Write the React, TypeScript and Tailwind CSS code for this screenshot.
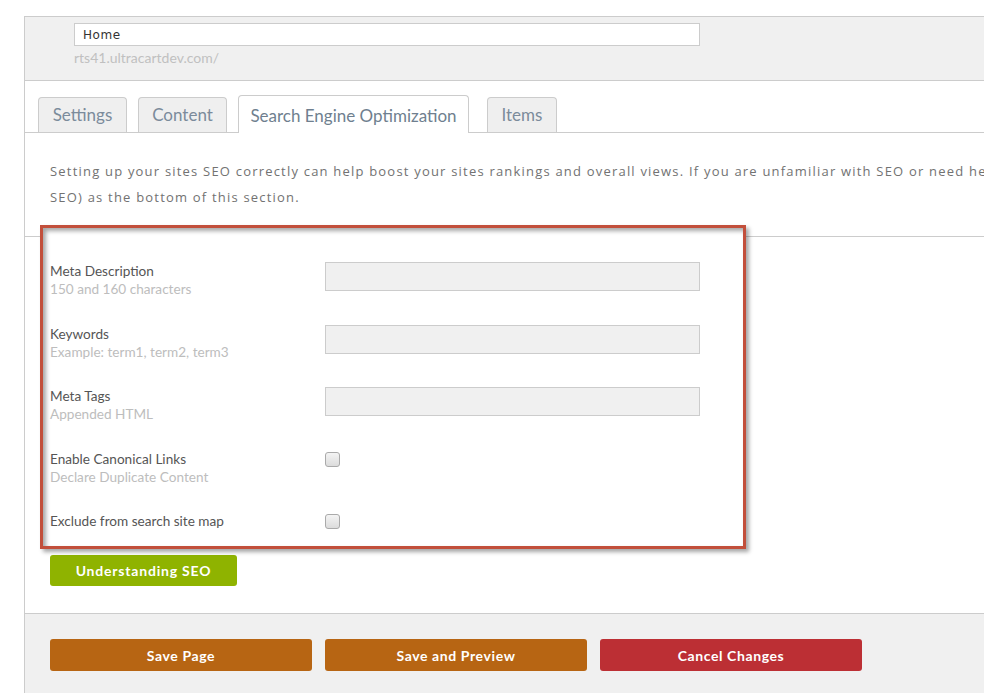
import React from 'react';

const tabs = [
  { label: 'Settings', w: 'w-[89px]', ml: 'ml-0' },
  { label: 'Content', w: 'w-[89px]', ml: 'ml-[11px]' },
  { label: 'Search Engine Optimization', w: 'w-[231px]', ml: 'ml-[11px]', active: true },
  { label: 'Items', w: 'w-[70px]', ml: 'ml-[18px]' },
];

const rows = [
  { label: 'Meta Description', hint: '150 and 160 characters', kind: 'input' },
  { label: 'Keywords', hint: 'Example: term1, term2, term3', kind: 'input' },
  { label: 'Meta Tags', hint: 'Appended HTML', kind: 'input' },
  { label: 'Enable Canonical Links', hint: 'Declare Duplicate Content', kind: 'check' },
  { label: 'Exclude from search site map', hint: '', kind: 'check' },
];

export default function App() {
  return (
    <div className="w-[984px] h-[693px] overflow-hidden bg-white font-['Lato',sans-serif]">
      <div className="ml-[24px] mt-[16px] border-l border-t border-[#cccccc] h-[677px] flex flex-col">
        {/* header */}
        <div className="h-[64px] bg-[#f0f0f0] border-b border-[#cccccc] pl-[49px] pt-[6px] shrink-0">
          <div className="w-[626px] h-[23px] bg-white border border-[#cccccc] flex items-center pl-[8px] font-['DejaVu_Sans',sans-serif] text-[12px] text-[#333] tracking-[0.6px]">
            Home
          </div>
          <div className="mt-[4px] text-[14px] text-[#c0c0c0] leading-[16px]">rts41.ultracartdev.com/</div>
        </div>

        {/* tabs */}
        <div className="pt-[14px] pl-[13px] border-b border-[#cccccc] flex items-end h-[52px] shrink-0">
          {tabs.map((t) =>
            t.active ? (
              <div
                key={t.label}
                className={`${t.w} ${t.ml} h-[38px] -mb-px pt-[2px] bg-white border border-b-0 border-[#cccccc] rounded-t-[4px] flex items-center justify-center text-[17px] text-[#6f7f8f]`}
              >
                {t.label}
              </div>
            ) : (
              <div
                key={t.label}
                className={`${t.w} ${t.ml} h-[35px] bg-[#efefef] border border-b-0 border-[#cccccc] rounded-t-[4px] flex items-center justify-center text-[17px] text-[#7b8b9b]`}
              >
                {t.label}
              </div>
            )
          )}
        </div>

        {/* description */}
        <div className="border-b border-[#cccccc] pl-[25px] pt-[25px] h-[104px] shrink-0 overflow-hidden whitespace-nowrap font-['Open_Sans',sans-serif] text-[13px] leading-[26px] tracking-[1.2px] text-[#727272]">
          <div>
            Setting up your sites SEO correctly can help boost your sites rankings and overall views. If you are unfamiliar with SEO or need help
          </div>
          <div>SEO) as the bottom of this section.</div>
        </div>

        {/* highlighted form */}
        <div className="ml-[15px] -mt-[12px] w-[706px] h-[324px] border-[3px] border-[#c24f3b] bg-white shadow-[3px_3px_4px_rgba(0,0,0,0.35),inset_3px_3px_4px_rgba(0,0,0,0.35)] pl-[7px] pt-[34px] relative z-10 shrink-0">
          {rows.map((r) => (
            <div key={r.label} className="flex h-[62.5px]">
              <div className="w-[275px] text-[13.6px] leading-[18px]">
                <div className="text-[#555555]">{r.label}</div>
                {r.hint && <div className="text-[#bdbdbd]">{r.hint}</div>}
              </div>
              {r.kind === 'input' ? (
                <div className="w-[375px] h-[29px] bg-[#f0f0f0] border border-[#cccccc]" />
              ) : (
                <div className="mt-[2px] w-[15px] h-[15px] rounded-[3px] border border-[#aaaaaa] bg-gradient-to-b from-[#f4f4f4] to-[#dcdcdc]" />
              )}
            </div>
          ))}
        </div>

        <div className="pl-[25px] pt-[6px] h-[64px] shrink-0">
          <button className="w-[187px] h-[31px] rounded-[3px] bg-[#8fb300] text-white text-[14px] font-bold tracking-[0.8px]">
            Understanding SEO
          </button>
        </div>

        {/* footer */}
        <div className="flex-1 bg-[#f0f0f0] border-t border-[#cccccc] pl-[25px] pt-[25px] flex gap-[13px] items-start">
          <button className="w-[262px] h-[32px] rounded-[3px] bg-[#b76513] text-white text-[14px] font-bold tracking-[0.6px]">
            Save Page
          </button>
          <button className="w-[262px] h-[32px] rounded-[3px] bg-[#b76513] text-white text-[14px] font-bold tracking-[0.6px]">
            Save and Preview
          </button>
          <button className="w-[262px] h-[32px] rounded-[3px] bg-[#bc2f34] text-white text-[14px] font-bold tracking-[0.6px]">
            Cancel Changes
          </button>
        </div>
      </div>
    </div>
  );
}
